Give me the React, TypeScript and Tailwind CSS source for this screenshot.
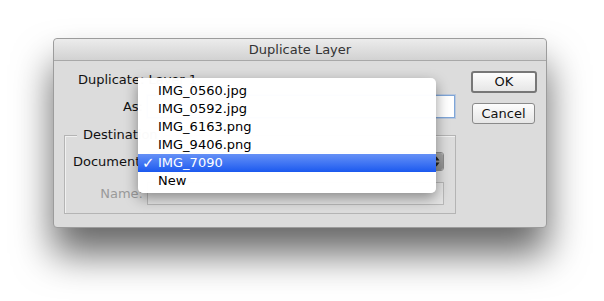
import React from "react";

const items = ["IMG_0560.jpg", "IMG_0592.jpg", "IMG_6163.png", "IMG_9406.png", "IMG_7090", "New"];

function App() {
  return (
    <div className="w-[604px] h-[301px] bg-white overflow-hidden pt-[38px] pl-[53px] font-['DejaVu_Sans',sans-serif] text-[13px] text-[#111]">
      <div className="relative w-[494px] h-[190px] bg-[#dcdcdc] rounded-[4px] border border-[#9c9c9c] shadow-[0_26px_38px_rgba(0,0,0,0.6)] flex flex-col">
        <div className="h-[22px] shrink-0 flex items-center justify-center rounded-t-[4px] bg-gradient-to-b from-[#ececec] to-[#d2d2d2] border-b border-[#a8a8a8] text-[#333]">
          Duplicate Layer
        </div>
        <div className="flex flex-1">
          <div className="w-[402px] pl-[10px] pt-[12px] flex flex-col">
            <div className="h-[14px] pl-[14px] leading-[14px]">Duplicate: Layer 1</div>
            <div className="flex items-center mt-[8px] h-[23px]">
              <span className="w-[83px] text-right pr-[4px]">As:</span>
              <div className="w-[308px] h-[23px] bg-white border border-[#7fa6d8] shadow-[0_0_0_1px_rgba(120,160,220,0.35)]"></div>
            </div>
            <div className="relative mt-[17px] w-[392px] h-[79px] border border-[#b4b4b4] shadow-[inset_1px_1px_0_#f0f0f0]">
              <span className="absolute left-[12px] -top-[9px] px-[6px] bg-[#dcdcdc] leading-[16px]">Destination</span>
              <div className="flex items-center mt-[16px] h-[19px]">
                <span className="w-[82px] pl-[8px]">Document:</span>
                <div className="w-[297px] h-[19px] flex justify-end rounded-[3px] border border-[#8c8c8c] bg-white overflow-hidden">
                  <div className="w-[14px] h-full bg-gradient-to-b from-[#a6a6a6] to-[#8e8e8e] flex items-center justify-center">
                    <svg width="7" height="11" viewBox="0 0 7 11">
                      <path d="M3.5 0.5 L6.5 4.5 L0.5 4.5 Z" fill="#222" />
                      <path d="M3.5 10.5 L6.5 6.5 L0.5 6.5 Z" fill="#222" />
                    </svg>
                  </div>
                </div>
              </div>
              <div className="flex items-center mt-[11px] h-[23px]">
                <span className="w-[82px] text-right pr-[4px] text-[#9a9a9a]">Name:</span>
                <div className="w-[297px] h-[23px] bg-[#e4e4e4] border border-[#b8b8b8]"></div>
              </div>
            </div>
          </div>
          <div className="flex flex-col pt-[10px] pl-[15px] gap-[10px]">
            <button className="w-[66px] h-[22px] rounded-[3px] border-2 border-[#777] bg-gradient-to-b from-[#fdfdfd] to-[#e6e6e6] flex items-center justify-center">
              OK
            </button>
            <button className="w-[63px] h-[21px] ml-[1px] rounded-[3px] border border-[#8a8a8a] bg-gradient-to-b from-[#fdfdfd] to-[#e6e6e6] flex items-center justify-center">
              Cancel
            </button>
          </div>
        </div>
        <div className="absolute left-[84px] top-[39px] w-[298px] h-[115px] bg-white/[0.98] rounded-b-[5px] rounded-tr-[5px] shadow-[0_5px_14px_rgba(0,0,0,0.4)] pt-[4px]">
          {items.map((it) => {
            const sel = it === "IMG_7090";
            return (
              <div
                key={it}
                className={
                  sel
                    ? "h-[18px] flex items-center bg-gradient-to-b from-[#6590f6] to-[#1a58ef] text-white"
                    : "h-[18px] flex items-center text-black"
                }
              >
                <span className="w-[20px] pl-[4px] text-[15px] leading-[18px]">{sel ? "✓" : ""}</span>
                <span>{it}</span>
              </div>
            );
          })}
        </div>
      </div>
    </div>
  );
}

export default App;
